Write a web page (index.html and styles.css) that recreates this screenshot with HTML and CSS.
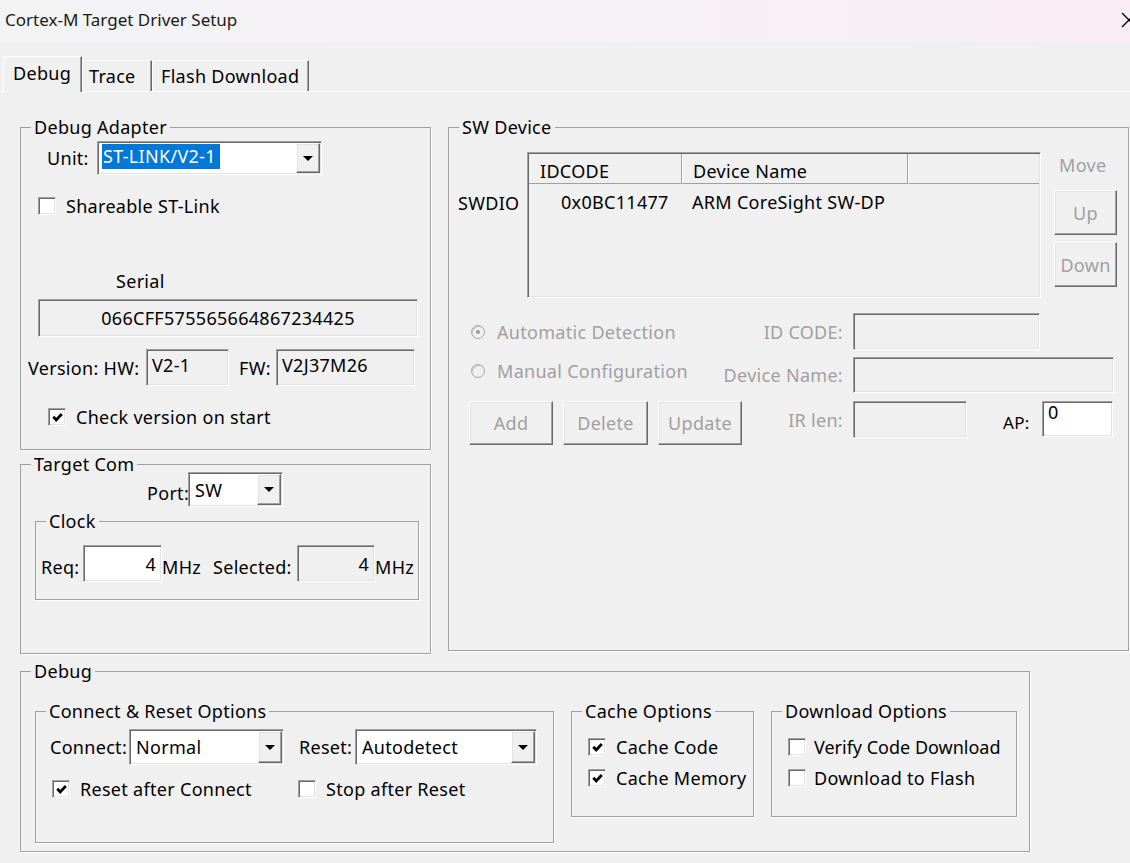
FILE: index.html
```html
<!DOCTYPE html>
<html>
<head>
<meta charset="utf-8">
<title>Cortex-M Target Driver Setup</title>
<link rel="stylesheet" href="styles.css">
</head>
<body>
<div class="titlebar">
  <span class="title">Cortex-M Target Driver Setup</span>
  <svg class="close" width="16" height="16" viewBox="0 0 16 16"><path d="M1 1 L15 15 M15 1 L1 15" stroke="#000" stroke-width="1.3" fill="none"/></svg>
</div>
<div class="tabs">
  <div class="tab active t-debug">Debug</div>
  <div class="tab t-trace">Trace</div>
  <div class="tab t-flash">Flash Download</div>
</div>
<div class="panel">
  <div class="leftcol">
    <fieldset class="grp adapter">
      <legend>Debug Adapter</legend>
      <div class="unit-row">
        <span class="unit-lbl">Unit:</span>
        <div class="combo sunken unit-combo"><span class="val"><span class="sel">ST-LINK/V2-1</span></span><span class="drop raised"></span></div>
      </div>
      <div class="chkrow share-row"><span class="chk sunken"></span>Shareable ST-Link</div>
      <div class="serial-lbl">Serial</div>
      <div class="edit sunken serial">066CFF575565664867234425</div>
      <div class="version-row">
        <span class="ver-lbl">Version: HW:</span>
        <div class="edit sunken txt hw">V2-1</div>
        <span class="fw-lbl">FW:</span>
        <div class="edit sunken txt fw">V2J37M26</div>
      </div>
      <div class="chkrow checkver-row"><span class="chk sunken"><svg width="11" height="11" viewBox="0 0 11 11"><path d="M1.3 4.8 L4.2 7.9 L9.8 2" stroke="#000" stroke-width="2.8" fill="none"/></svg></span>Check version on start</div>
    </fieldset>
    <fieldset class="grp targetcom">
      <legend>Target Com</legend>
      <div class="port-row">
        <span class="port-lbl">Port:</span>
        <div class="combo sunken port-combo"><span class="val">SW</span><span class="drop raised"></span></div>
      </div>
      <fieldset class="grp clock">
        <legend>Clock</legend>
        <div class="req-row">
          <span class="lbl req-lbl">Req:</span>
          <div class="edit sunken num white req-f">4</div>
          <span class="lbl mhz1">MHz</span>
          <span class="lbl selc-lbl">Selected:</span>
          <div class="edit sunken num selc-f">4</div>
          <span class="lbl">MHz</span>
        </div>
      </fieldset>
    </fieldset>
  </div>
  <fieldset class="grp swdev">
    <legend>SW Device</legend>
    <div class="sw-top">
      <div class="swdio">SWDIO</div>
      <div class="list sunken">
        <div class="lhead"><span class="hc c1">IDCODE</span><span class="hc c2">Device Name</span><span class="hc c3"></span></div>
        <div class="lrow"><span class="c1">0x0BC11477</span><span class="c2">ARM CoreSight SW-DP</span></div>
      </div>
      <div class="move">
        <div class="move-lbl dis">Move</div>
        <div class="btn raised dis up">Up</div>
        <div class="btn raised dis down">Down</div>
      </div>
    </div>
    <div class="sw-row r1">
      <div class="radio-item dis"><span class="radio on"></span>Automatic Detection</div>
      <span class="rl dis">ID CODE:</span>
      <div class="edit sunken idcode"></div>
    </div>
    <div class="sw-row r2">
      <div class="radio-item dis manual"><span class="radio"></span>Manual Configuration</div>
      <span class="rl dis">Device Name:</span>
      <div class="edit sunken devname"></div>
    </div>
    <div class="sw-row r3">
      <div class="btn raised dis b-add">Add</div>
      <div class="btn raised dis b-del">Delete</div>
      <div class="btn raised dis b-upd">Update</div>
      <span class="ir-lbl dis">IR len:</span>
      <div class="edit sunken irlen"></div>
      <span class="ap-lbl">AP:</span>
      <div class="edit sunken white txt ap">0</div>
    </div>
  </fieldset>
  <fieldset class="grp debuggrp">
    <legend>Debug</legend>
    <div class="dbg-inner">
      <fieldset class="grp conn">
        <legend>Connect &amp; Reset Options</legend>
        <div class="conn-row">
          <span class="conn-lbl">Connect:</span>
          <div class="combo sunken conn-combo"><span class="val">Normal</span><span class="drop raised"></span></div>
          <span class="reset-lbl">Reset:</span>
          <div class="combo sunken reset-combo"><span class="val">Autodetect</span><span class="drop raised"></span></div>
        </div>
        <div class="conn-chk">
          <div class="chkrow rac"><span class="chk sunken"><svg width="11" height="11" viewBox="0 0 11 11"><path d="M1.3 4.8 L4.2 7.9 L9.8 2" stroke="#000" stroke-width="2.8" fill="none"/></svg></span>Reset after Connect</div>
          <div class="chkrow"><span class="chk sunken"></span>Stop after Reset</div>
        </div>
      </fieldset>
      <fieldset class="grp cache">
        <legend>Cache Options</legend>
        <div class="chkrow first"><span class="chk sunken"><svg width="11" height="11" viewBox="0 0 11 11"><path d="M1.3 4.8 L4.2 7.9 L9.8 2" stroke="#000" stroke-width="2.8" fill="none"/></svg></span>Cache Code</div>
        <div class="chkrow second"><span class="chk sunken"><svg width="11" height="11" viewBox="0 0 11 11"><path d="M1.3 4.8 L4.2 7.9 L9.8 2" stroke="#000" stroke-width="2.8" fill="none"/></svg></span>Cache Memory</div>
      </fieldset>
      <fieldset class="grp dl">
        <legend>Download Options</legend>
        <div class="chkrow first verify"><span class="chk sunken"></span>Verify Code Download</div>
        <div class="chkrow second"><span class="chk sunken"></span>Download to Flash</div>
      </fieldset>
    </div>
  </fieldset>
</div>
</body>
</html>
```
FILE: styles.css
```css
* { box-sizing: border-box; }
html, body { margin: 0; padding: 0; }
body {
  width: 1130px; height: 863px; overflow: hidden;
  background: #f0f0f0;
  font-family: "Noto Sans", "Open Sans", sans-serif;
  font-size: 18px; line-height: 20px; letter-spacing: 0.3px;
  color: #000;
}
.titlebar {
  height: 42px; display: flex; align-items: center; justify-content: space-between;
  padding: 0 0 3px 5px; overflow: hidden;
  background: linear-gradient(90deg, #f3f3f4 0%, #f5f1f4 55%, #f9edf3 100%);
}
.title { font-size: 17px; letter-spacing: 0; color: #1a1a1a; }
.close { flex: none; margin-right: -7px; }

.tabs { height: 49px; display: flex; align-items: flex-end; padding-left: 3px; }
.tab {
  height: 31px; padding-top: 5px; white-space: nowrap;
  border-top: 1px solid #fff; border-left: 1px solid #fff; border-right: 1px solid #696969;
  box-shadow: inset -1px 0 0 #a0a0a0;
}
.tab.active { height: 36px; padding-top: 6px; margin-bottom: -1px; position: relative; z-index: 1; background: #f0f0f0; }
.t-debug { width: 79px; padding-left: 9px; }
.t-trace { width: 70px; padding-left: 6px; }
.t-flash { width: 157px; padding-left: 8px; }

.panel {
  border-top: 1px solid #fff;
  display: grid; grid-template-columns: 411px 681px; column-gap: 17px;
  padding: 25px 0 0 20px; align-items: start;
}
.leftcol { display: flex; flex-direction: column; gap: 4px; }

.grp { margin: 0; padding: 0; border: 1px solid #a0a0a0; min-width: 0; box-shadow: 1px 1px 0 #fff; }
legend { padding: 0 3px; margin-left: 10px; line-height: 20px; white-space: nowrap; }

.sunken {
  border: 1px solid; border-color: #a0a0a0 #fff #fff #a0a0a0;
  box-shadow: inset 1px 1px 0 #696969, inset -1px -1px 0 #e3e3e3;
}
.raised {
  border: 1px solid; border-color: #fff #696969 #696969 #fff;
  box-shadow: inset -1px -1px 0 #a0a0a0, inset 1px 1px 0 #e3e3e3;
  background: #f0f0f0;
}
.edit { background: #f0f0f0; white-space: nowrap; }
.white { background: #fff; }
.txt { padding: 5px 0 0 5px; }
.num { display: flex; align-items: center; justify-content: flex-end; padding-right: 5px; }
.dis { color: #a0a0a0; }

.combo { display: flex; align-items: stretch; background: #fff; padding: 1px; }
.combo .val { flex: 1; padding-left: 5px; display: flex; align-items: center; white-space: nowrap; }
.drop { width: 24px; flex: none; display: flex; align-items: center; justify-content: center; }
.drop::after { content: ""; border-left: 5px solid transparent; border-right: 5px solid transparent; border-top: 5px solid #000; }
.sel {
  display: inline-block; align-self: flex-start; background: #0078d7; color: #fff;
  height: 25px; line-height: 25px; padding: 0 4px 0 1px; margin: 1px 0 0 -2px;
}

.chkrow { display: flex; align-items: center; height: 20px; white-space: nowrap; }
.chk { width: 18px; height: 18px; flex: none; background: #fff; margin-right: 10px; display: flex; align-items: center; justify-content: center; }

.btn { display: flex; align-items: center; justify-content: center; }

/* Debug Adapter */
.adapter { height: 333px; }
.unit-row { display: flex; align-items: center; margin: 4px 0 0 26px; }
.unit-lbl { width: 50px; }
.unit-combo { width: 225px; height: 34px; }
.share-row { margin: 21px 0 0 17px; }
.share-row .chk { margin-right: 10px; }
.serial-lbl { margin: 55px 0 0 95px; }
.serial { margin: 8px 0 0 17px; width: 380px; height: 38px; display: flex; align-items: center; justify-content: center; }
.version-row { display: flex; align-items: center; margin: 12px 0 0 7px; }
.ver-lbl { width: 118px; }
.hw { width: 83px; height: 37px; }
.fw-lbl { width: 37px; margin-left: 10px; }
.fw { width: 139px; height: 37px; }
.checkver-row { margin: 21px 0 0 27px; }
.checkver-row .chk { margin-right: 10px; }

/* Target Com */
.targetcom { height: 200px; }
.port-row { display: flex; align-items: center; margin: -2px 0 0 126px; }
.port-lbl { width: 41px; margin-top: 7px; }
.port-combo { width: 95px; height: 35px; }
.clock { margin: 4px 0 0 14px; width: 384px; height: 89px; }
.req-row { display: flex; align-items: center; margin: 14px 0 0 5px; }
.req-row .lbl { margin-top: 6px; }
.req-lbl { width: 42px; }
.req-f { width: 79px; height: 37px; }
.mhz1 { width: 51px; }
.selc-lbl { width: 84px; }
.selc-f { width: 78px; height: 37px; }

/* SW Device */
.swdev { height: 534px; }
.sw-top { display: flex; }
.swdio { width: 78px; padding: 56px 0 0 9px; }
.list { margin-top: 15px; width: 514px; height: 146px; background: #f0f0f0; padding: 1px; }
.lhead { display: flex; height: 30px; }
.hc { height: 30px; padding: 7px 0 0 10px; border-bottom: 1px solid #a0a0a0; border-right: 1px solid #a0a0a0; white-space: nowrap; }
.hc + .hc { border-left: 1px solid #fff; }
.hc.c1 { width: 153px; padding-left: 11px; }
.hc.c2 { width: 226px; }
.hc.c3 { flex: 1; border-right: none; }
.lrow { display: flex; padding-top: 8px; white-space: nowrap; }
.lrow .c1 { width: 153px; padding-left: 32px; }
.lrow .c2 { padding-left: 10px; }
.move { margin-left: 13px; width: 63px; display: flex; flex-direction: column; }
.move-lbl { margin-top: 18px; padding-left: 5px; }
.up { margin-top: 15px; height: 45px; }
.down { margin-top: 7px; height: 45px; }

.sw-row { display: flex; align-items: center; margin-left: 20px; }
.r1 { margin-top: 15px; height: 37px; }
.r2 { margin-top: 7px; height: 36px; }
.r3 { margin-top: 8px; align-items: flex-start; }
.radio-item { width: 253px; display: flex; align-items: center; white-space: nowrap; }
.radio-item.manual { margin-bottom: 8px; }
.radio {
  width: 14px; height: 14px; margin: 0 12px 0 2px; border-radius: 50%; flex: none;
  border: 1px solid #a8a8a8; background: #f0f0f0; box-shadow: inset 1px 1px 0 #c8c8c8;
  display: flex; align-items: center; justify-content: center;
}
.radio.on::after { content: ""; width: 4px; height: 4px; border-radius: 50%; background: #9a9a9a; }
.rl { width: 121px; text-align: right; white-space: nowrap; }
.idcode { margin-left: 10px; width: 187px; height: 37px; }
.devname { margin-left: 10px; width: 261px; height: 36px; }
.b-add { width: 84px; height: 44px; }
.b-del { width: 85px; height: 44px; margin-left: 10px; }
.b-upd { width: 84px; height: 44px; margin-left: 10px; }
.ir-lbl { width: 101px; text-align: right; margin-top: 9px; white-space: nowrap; }
.irlen { margin-left: 10px; width: 114px; height: 37px; }
.ap-lbl { width: 39px; margin: 12px 0 0 36px; font-size: 17px; }
.ap { width: 71px; height: 36px; padding-top: 0; line-height: 20px; }

/* Debug (bottom) */
.debuggrp { grid-column: 1 / 3; margin-top: 7px; width: 1010px; height: 191px; }
.dbg-inner { display: flex; align-items: flex-start; padding-left: 14px; margin-top: 20px; }
.conn { width: 519px; height: 142px; }
.conn-row { display: flex; align-items: center; margin: 8px 0 0 14px; }
.conn-lbl { width: 79px; }
.conn-combo { width: 155px; height: 36px; }
.reset-lbl { width: 56px; margin-left: 15px; }
.reset-combo { width: 182px; height: 36px; }
.conn-chk { display: flex; margin: 14px 0 0 16px; }
.rac { width: 246px; }
.cache { margin-left: 17px; width: 183px; height: 116px; }
.dl { margin-left: 17px; width: 246px; height: 116px; }
.cache .chkrow, .dl .chkrow { margin-left: 16px; }
.chkrow.first { margin-top: 16px; }
.chkrow.second { margin-top: 11px; }
.dl .chk { margin-right: 8px; }
.verify { width: 224px; letter-spacing: 0; }
```
